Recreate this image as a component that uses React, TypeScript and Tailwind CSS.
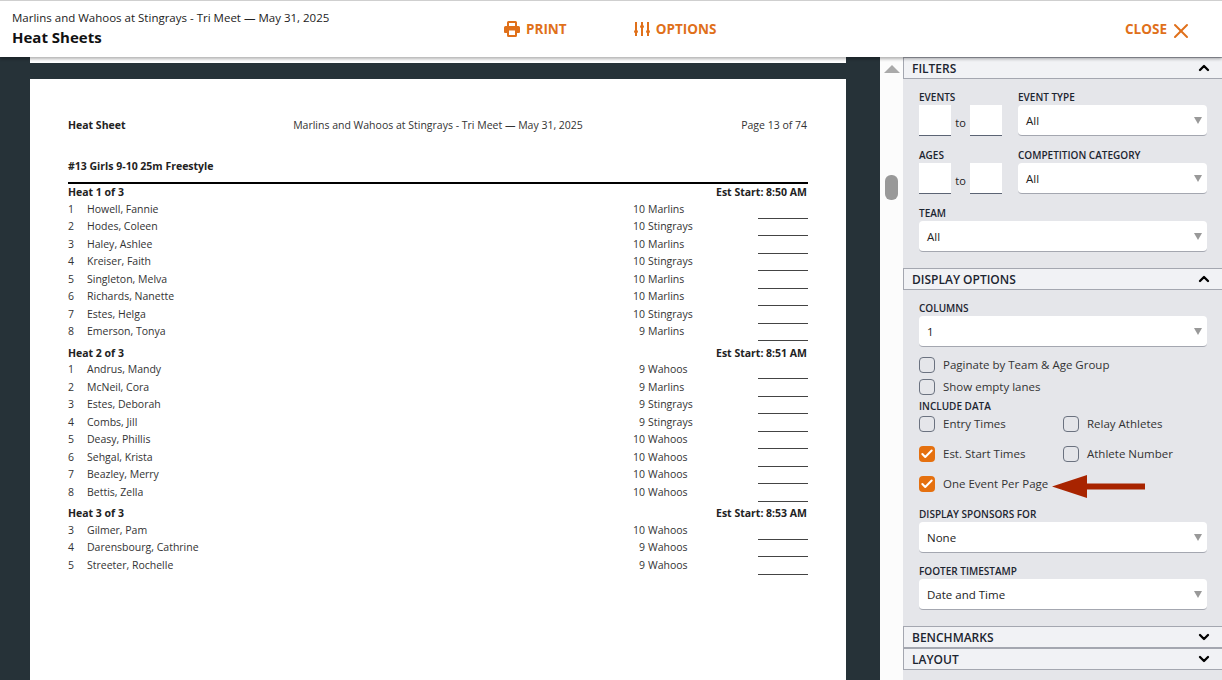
import { ChevronDown, ChevronUp, X, Check } from 'lucide-react'

const heats = [
  {
    title: 'Heat 1 of 3',
    start: 'Est Start: 8:50 AM',
    rows: [
      ['1', 'Howell, Fannie', '10', 'Marlins'],
      ['2', 'Hodes, Coleen', '10', 'Stingrays'],
      ['3', 'Haley, Ashlee', '10', 'Marlins'],
      ['4', 'Kreiser, Faith', '10', 'Stingrays'],
      ['5', 'Singleton, Melva', '10', 'Marlins'],
      ['6', 'Richards, Nanette', '10', 'Marlins'],
      ['7', 'Estes, Helga', '10', 'Stingrays'],
      ['8', 'Emerson, Tonya', '9', 'Marlins'],
    ],
  },
  {
    title: 'Heat 2 of 3',
    start: 'Est Start: 8:51 AM',
    rows: [
      ['1', 'Andrus, Mandy', '9', 'Wahoos'],
      ['2', 'McNeil, Cora', '9', 'Marlins'],
      ['3', 'Estes, Deborah', '9', 'Stingrays'],
      ['4', 'Combs, Jill', '9', 'Stingrays'],
      ['5', 'Deasy, Phillis', '10', 'Wahoos'],
      ['6', 'Sehgal, Krista', '10', 'Wahoos'],
      ['7', 'Beazley, Merry', '10', 'Wahoos'],
      ['8', 'Bettis, Zella', '10', 'Wahoos'],
    ],
  },
  {
    title: 'Heat 3 of 3',
    start: 'Est Start: 8:53 AM',
    rows: [
      ['3', 'Gilmer, Pam', '10', 'Wahoos'],
      ['4', 'Darensbourg, Cathrine', '9', 'Wahoos'],
      ['5', 'Streeter, Rochelle', '9', 'Wahoos'],
    ],
  },
]

function SectionHeader({ title, open }: { title: string; open?: boolean }) {
  return (
    <div className="h-[22px] flex-none flex items-center justify-between pl-[8px] pr-[10px] bg-[#f1f2f5] border-y border-l border-[#a4a7b0] text-[12px] font-semibold text-[#1c2530]">
      <span className="pt-[2px]">{title}</span>
      {open ? <ChevronUp className="w-[16px] h-[16px] text-black" strokeWidth={3.5} /> : <ChevronDown className="w-[16px] h-[16px] text-black" strokeWidth={3.5} />}
    </div>
  )
}

function FieldLabel({ children }: { children: string }) {
  return <div className="h-[16px] text-[10px] leading-[16px] font-semibold text-[#1c2530] whitespace-nowrap">{children}</div>
}

function Select({ value, className }: { value: string; className: string }) {
  return (
    <div className={`h-[31px] flex items-center justify-between pl-[8px] pr-[5px] bg-white rounded-[4px] border-b border-[#a4a7b0] text-[11.5px] text-[#222] ${className}`}>
      <span className="pt-[2px]">{value}</span>
      <span className="w-0 h-0 border-x-[4px] border-x-transparent border-t-[7px] border-t-[#999]" />
    </div>
  )
}

function RangeInputs() {
  return (
    <div className="flex items-center">
      <div className="w-[32px] h-[31px] bg-white border-b border-[#5c6474]" />
      <span className="w-[19px] text-center text-[11px] text-[#222] pt-[5px]">to</span>
      <div className="w-[32px] h-[31px] bg-white border-b border-[#5c6474]" />
    </div>
  )
}

function CheckItem({ label, checked, className }: { label: string; checked?: boolean; className?: string }) {
  return (
    <div className={`flex items-center gap-[8px] text-[11.5px] leading-[16px] text-[#333] whitespace-nowrap ${className ?? ''}`}>
      {checked ? (
        <span className="w-[16px] h-[16px] rounded-[4px] bg-[#e5700f] flex items-center justify-center">
          <Check className="w-[14px] h-[14px] text-white" strokeWidth={3.5} />
        </span>
      ) : (
        <span className="w-[16px] h-[16px] rounded-[4px] border border-[#6b7280]" />
      )}
      <span>{label}</span>
    </div>
  )
}

function PrintIcon() {
  return (
    <svg viewBox="0 0 16 16" className="w-[16px] h-[16px]" fill="currentColor" fillRule="evenodd">
      <path d="M3 1.5A1.5 1.5 0 0 1 4.5 0h7A1.5 1.5 0 0 1 13 1.5V5h1.5A1.5 1.5 0 0 1 16 6.5V11a1 1 0 0 1-1 1h-2v2.5a1.5 1.5 0 0 1-1.5 1.5h-7A1.5 1.5 0 0 1 3 14.5V12H1a1 1 0 0 1-1-1V6.5A1.5 1.5 0 0 1 1.5 5H3z M5 2v3h6V2z M5 9.5V14h6V9.5z" />
    </svg>
  )
}

function OptionsIcon() {
  return (
    <svg viewBox="0 0 16 14" className="w-[16px] h-[14px]" fill="currentColor">
      <rect x="1" y="0" width="2" height="14" />
      <rect x="7" y="0" width="2" height="14" />
      <rect x="13" y="0" width="2" height="14" />
      <rect x="0" y="8" width="4" height="3" rx="1.5" />
      <rect x="6" y="3" width="4" height="3" rx="1.5" />
      <rect x="12" y="8" width="4" height="3" rx="1.5" />
    </svg>
  )
}

export default function App() {
  return (
    <div className="w-[1222px] h-[680px] overflow-hidden flex flex-col font-['Open_Sans',sans-serif] bg-white">
      <header className="relative z-10 h-[57px] flex-none flex bg-white border-t border-[#cfcfcf] shadow-[0_2px_3px_rgba(0,0,0,0.3)]">
        <div className="w-[470px] pl-[12px] pt-[9px]">
          <div className="text-[11.5px] leading-[16px] text-[#222] whitespace-nowrap">Marlins and Wahoos at Stingrays - Tri Meet — May 31, 2025</div>
          <div className="mt-[1px] text-[15px] leading-[20px] font-bold text-[#111]">Heat Sheets</div>
        </div>
        <div className="flex items-start pt-[19px] text-[13.5px] leading-[18px] font-bold text-[#e0701a]">
          <div className="ml-[34px] flex items-center gap-[6px]">
            <PrintIcon />
            <span>PRINT</span>
          </div>
          <div className="ml-[67px] flex items-center gap-[6px]">
            <OptionsIcon />
            <span>OPTIONS</span>
          </div>
        </div>
        <div className="ml-auto pr-[35px] pt-[18px] flex items-start gap-[2px] text-[13.5px] leading-[18px] font-bold text-[#e0701a]">
          <span className="pt-[1px]">CLOSE</span>
          <X className="w-[24px] h-[24px] -mr-[6px]" strokeWidth={2} />
        </div>
      </header>

      <div className="flex-1 flex min-h-0">
        <main className="w-[880px] flex-none bg-[#263238] pl-[30px] overflow-hidden">
          <div className="w-[816px] h-[6px] bg-white" />
          <section className="w-[816px] h-[700px] mt-[16px] bg-white px-[38px] pt-[39px] text-[10.5px] text-[#333]">
            <div className="flex justify-between leading-[14px]">
              <span className="w-[150px] font-bold text-[#222]">Heat Sheet</span>
              <span>Marlins and Wahoos at Stingrays - Tri Meet — May 31, 2025</span>
              <span className="w-[150px] text-right pr-[1px]">Page 13 of 74</span>
            </div>
            <div className="mt-[27px] leading-[14px] font-bold text-[#222]">#13 Girls 9-10 25m Freestyle</div>
            <div className="mt-[9px] border-t-2 border-black">
              {heats.map((heat) => (
                <div key={heat.title} className="mb-[3.5px]">
                  <div className="h-[17px] pt-[1px] flex items-center justify-between font-bold text-[#222]">
                    <span>{heat.title}</span>
                    <span className="pr-[1px]">{heat.start}</span>
                  </div>
                  {heat.rows.map((r) => (
                    <div key={r[0] + r[1]} className="h-[17.5px] flex items-center">
                      <span className="w-[19px]">{r[0]}</span>
                      <span className="w-[523px]">{r[1]}</span>
                      <span className="w-[38px] text-right pr-[3px]">{r[2]}</span>
                      <span className="w-[110px]">{r[3]}</span>
                      <span className="h-full w-[50px] border-b border-[#444]" />
                    </div>
                  ))}
                </div>
              ))}
            </div>
          </section>
        </main>

        <div className="w-[23px] flex-none flex flex-col items-center bg-[#fcfcfc]">
          <span className="mt-[8px] w-0 h-0 border-x-[8px] border-x-transparent border-b-[8px] border-b-[#aaa]" />
          <span className="mt-[102px] w-[13px] h-[25px] rounded-[6px] bg-[#999]" />
        </div>

        <aside className="flex-1 flex flex-col bg-[#e5e6ea]">
          <SectionHeader title="FILTERS" open />
          <div className="pl-[16px] pr-[15px] pt-[10px] h-[189px] flex-none">
            <div className="flex gap-[16px]">
              <div className="w-[83px]">
                <FieldLabel>EVENTS</FieldLabel>
                <RangeInputs />
              </div>
              <div className="flex-1">
                <FieldLabel>EVENT TYPE</FieldLabel>
                <Select value="All" className="w-full" />
              </div>
            </div>
            <div className="flex gap-[16px] mt-[11px]">
              <div className="w-[83px]">
                <FieldLabel>AGES</FieldLabel>
                <RangeInputs />
              </div>
              <div className="flex-1">
                <FieldLabel>COMPETITION CATEGORY</FieldLabel>
                <Select value="All" className="w-full" />
              </div>
            </div>
            <div className="mt-[11px]">
              <FieldLabel>TEAM</FieldLabel>
              <Select value="All" className="w-full" />
            </div>
          </div>

          <SectionHeader title="DISPLAY OPTIONS" open />
          <div className="pl-[16px] pr-[15px] pt-[10px] h-[336px] flex-none">
            <FieldLabel>COLUMNS</FieldLabel>
            <Select value="1" className="w-full" />
            <CheckItem label="Paginate by Team & Age Group" className="mt-[10px]" />
            <CheckItem label="Show empty lanes" className="mt-[6px]" />
            <div className="mt-[3px]">
              <FieldLabel>INCLUDE DATA</FieldLabel>
            </div>
            <div className="grid grid-cols-[144px_1fr] gap-y-[14px] mt-[2px]">
              <CheckItem label="Entry Times" />
              <CheckItem label="Relay Athletes" />
              <CheckItem label="Est. Start Times" checked />
              <CheckItem label="Athlete Number" />
            </div>
            <div className="relative mt-[14px]">
              <CheckItem label="One Event Per Page" checked />
              <svg viewBox="0 0 93 23" className="absolute left-[133px] top-[-1px] w-[93px] h-[23px]" fill="#a82400">
                <path d="M0 11.5 35 0v8.5h58v6H35V23z" />
              </svg>
            </div>
            <div className="mt-[14px]">
              <FieldLabel>DISPLAY SPONSORS FOR</FieldLabel>
              <Select value="None" className="w-full" />
            </div>
            <div className="mt-[10px]">
              <FieldLabel>FOOTER TIMESTAMP</FieldLabel>
              <Select value="Date and Time" className="w-full" />
            </div>
          </div>

          <SectionHeader title="BENCHMARKS" />
          <SectionHeader title="LAYOUT" />
        </aside>
      </div>
    </div>
  )
}
